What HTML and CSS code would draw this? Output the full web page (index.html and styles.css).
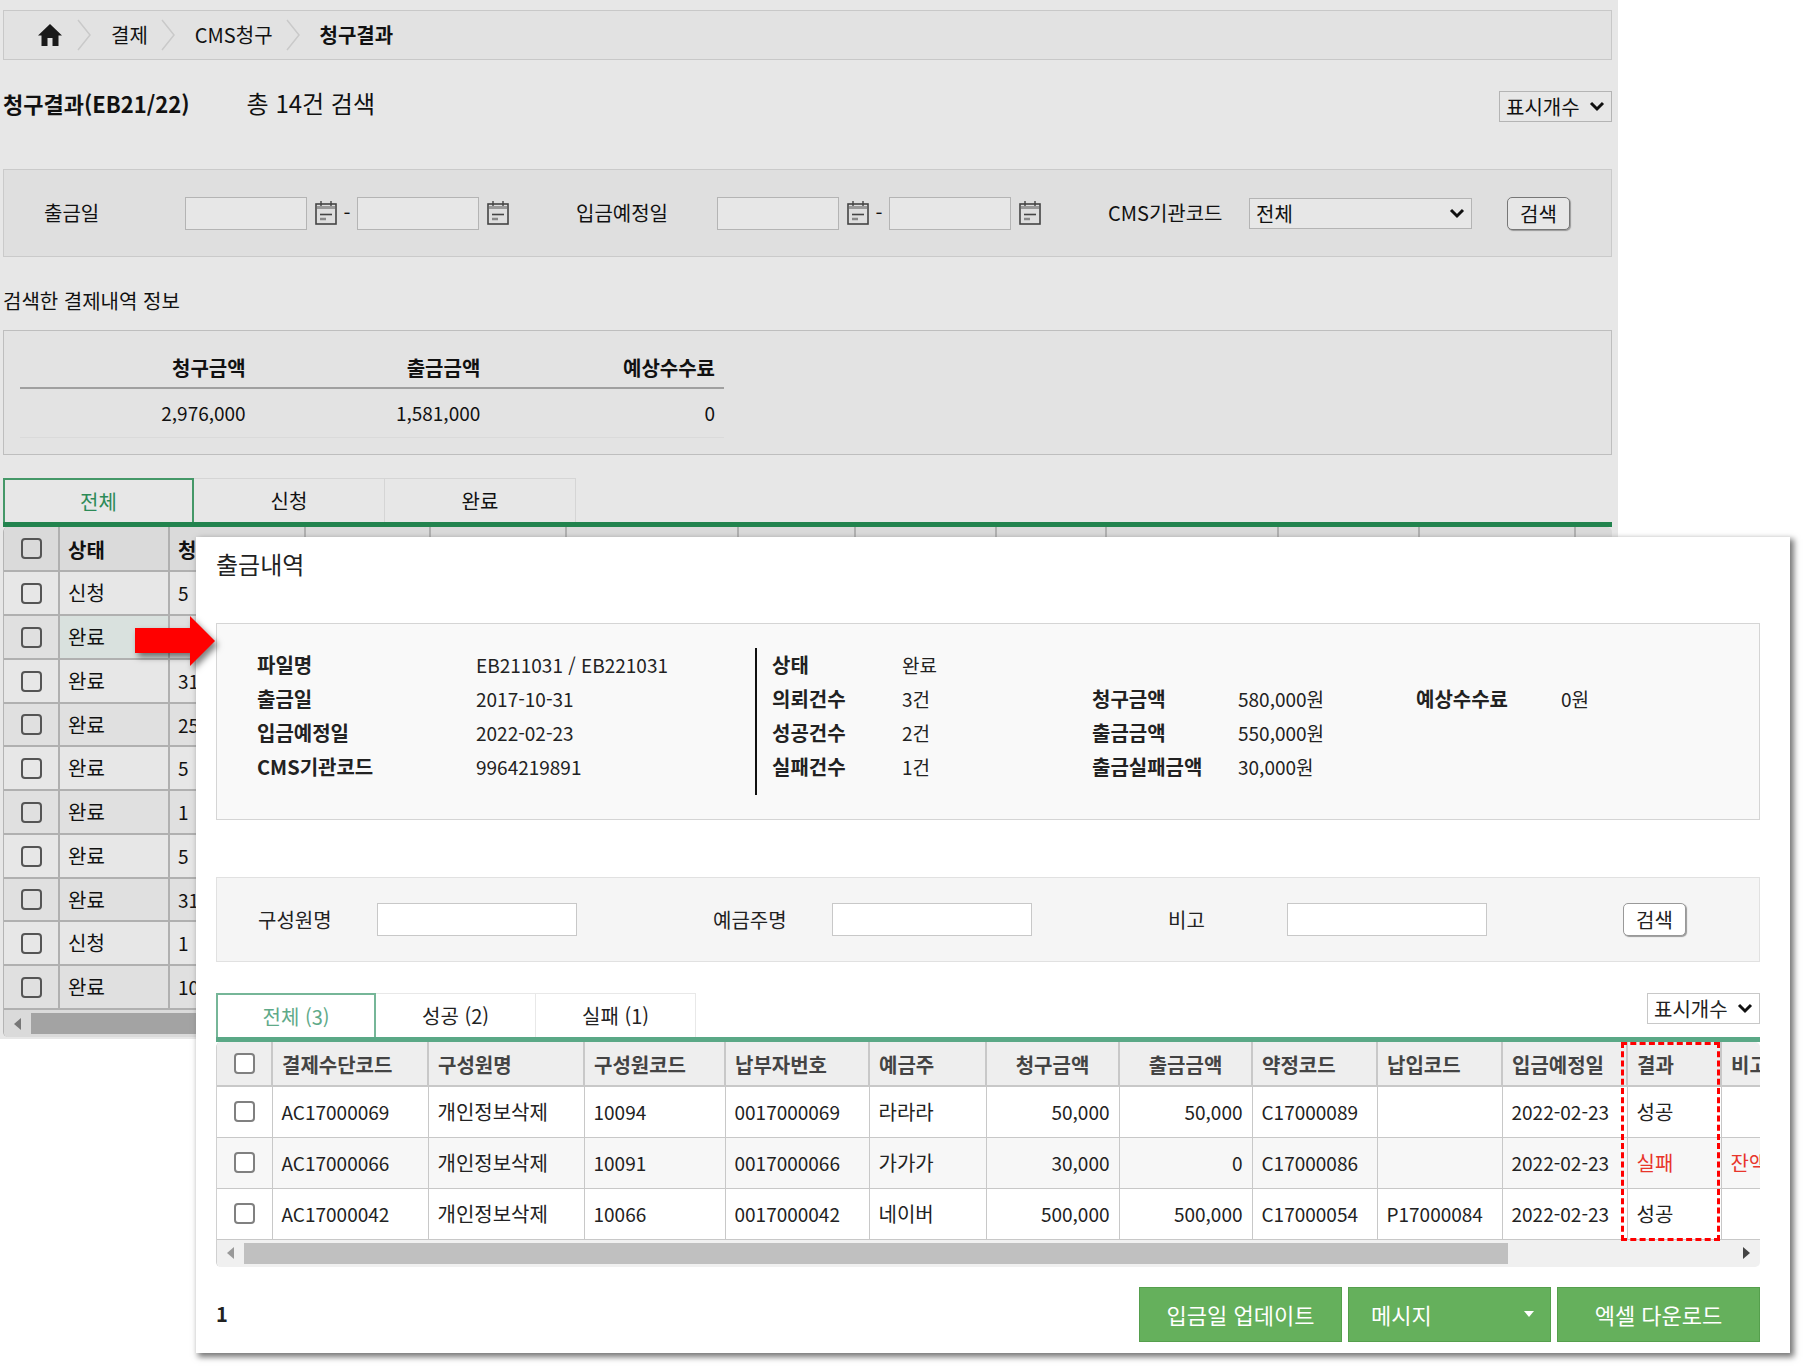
FILE: index.html
```html
<!DOCTYPE html>
<html lang="ko">
<head>
    <meta charset="UTF-8">
    <meta name="viewport" content="width=device-width, initial-scale=1.0">
    <title>청구결과</title>
    <link rel="stylesheet" href="styles.css">
</head>
<body>
    <svg class="sprite" aria-hidden="true">
        <symbol id="icon-calendar" viewBox="0 0 22 24">
            <rect x="1" y="3" width="20" height="20" fill="none" stroke="#444" stroke-width="1.6"/>
            <rect x="2" y="5" width="18" height="3" fill="#999"/>
            <path d="M6 0v5M16 0v5" stroke="#444" stroke-width="1.4"/>
            <path d="M5 13.500h12" stroke="#444" stroke-width="1.600"/>
            <path d="M5 18h6" stroke="#888" stroke-width="2.500"/>
        </symbol>
        <symbol id="icon-next" viewBox="0 0 14 32">
            <path d="M1 1l12 15L1 31" fill="none" stroke="#c9c9c9" stroke-width="1.500"/>
        </symbol>
    </svg>

    <main class="page">
        <nav class="breadcrumb">
            <a href="#" class="home" aria-label="홈">
                <svg width="24" height="22" viewBox="0 0 24 22"><path d="M12 0l12 11.500h-3.500V22h-6v-8h-5v8h-6V11.500H0z" fill="#1a1a1a"/></svg>
            </a>
            <svg class="next"><use href="#icon-next"/></svg>
            <a href="#">결제</a>
            <svg class="next"><use href="#icon-next"/></svg>
            <a href="#">CMS청구</a>
            <svg class="next"><use href="#icon-next"/></svg>
            <strong>청구결과</strong>
        </nav>

        <div class="title-row">
            <h1>청구결과(EB21/22)</h1>
            <span class="count">총 14건 검색</span>
            <select class="page-size" aria-label="표시개수"><option>표시개수</option></select>
        </div>

        <form class="search">
            <div class="field">
                <label for="outFrom">출금일</label>
                <input type="text" id="outFrom" class="date">
                <svg class="cal"><use href="#icon-calendar"/></svg>
                <span class="dash">-</span>
                <input type="text" class="date" aria-label="출금일 종료">
                <svg class="cal"><use href="#icon-calendar"/></svg>
            </div>
            <div class="field">
                <label for="inFrom">입금예정일</label>
                <input type="text" id="inFrom" class="date">
                <svg class="cal"><use href="#icon-calendar"/></svg>
                <span class="dash">-</span>
                <input type="text" class="date" aria-label="입금예정일 종료">
                <svg class="cal"><use href="#icon-calendar"/></svg>
            </div>
            <div class="field">
                <label for="cmsCode">CMS기관코드</label>
                <select id="cmsCode" class="code"><option>전체</option></select>
            </div>
            <button type="button" class="btn-search">검색</button>
        </form>

        <h2>검색한 결제내역 정보</h2>
        <div class="summary">
            <table>
                <thead><tr><th>청구금액</th><th>출금금액</th><th>예상수수료</th></tr></thead>
                <tbody><tr><td>2,976,000</td><td>1,581,000</td><td>0</td></tr></tbody>
            </table>
        </div>

        <div class="tabs">
            <button type="button" class="tab active">전체</button>
            <button type="button" class="tab">신청</button>
            <button type="button" class="tab">완료</button>
        </div>
        <div class="grid">
            <table>
                <colgroup>
                    <col class="c-check"><col class="c-110"><col class="c-136"><col class="c-125"><col class="c-136"><col class="c-172"><col class="c-117"><col class="c-141"><col class="c-110"><col class="c-172"><col class="c-141"><col class="c-156"><col>
                </colgroup>
                <thead>
                    <tr><th><input type="checkbox" aria-label="전체 선택"></th><th>상태</th><th>청</th><th></th><th></th><th></th><th></th><th></th><th></th><th></th><th></th><th></th><th></th></tr>
                </thead>
                <tbody>
                    <tr><td><input type="checkbox" aria-label="선택"></td><td>신청</td><td class="num">5</td><td></td><td></td><td></td><td></td><td></td><td></td><td></td><td></td><td></td><td></td></tr>
                    <tr><td><input type="checkbox" aria-label="선택"></td><td class="picked">완료</td><td></td><td></td><td></td><td></td><td></td><td></td><td></td><td></td><td></td><td></td><td></td></tr>
                    <tr><td><input type="checkbox" aria-label="선택"></td><td>완료</td><td class="num">31</td><td></td><td></td><td></td><td></td><td></td><td></td><td></td><td></td><td></td><td></td></tr>
                    <tr><td><input type="checkbox" aria-label="선택"></td><td>완료</td><td class="num">25</td><td></td><td></td><td></td><td></td><td></td><td></td><td></td><td></td><td></td><td></td></tr>
                    <tr><td><input type="checkbox" aria-label="선택"></td><td>완료</td><td class="num">5</td><td></td><td></td><td></td><td></td><td></td><td></td><td></td><td></td><td></td><td></td></tr>
                    <tr><td><input type="checkbox" aria-label="선택"></td><td>완료</td><td class="num">1</td><td></td><td></td><td></td><td></td><td></td><td></td><td></td><td></td><td></td><td></td></tr>
                    <tr><td><input type="checkbox" aria-label="선택"></td><td>완료</td><td class="num">5</td><td></td><td></td><td></td><td></td><td></td><td></td><td></td><td></td><td></td><td></td></tr>
                    <tr><td><input type="checkbox" aria-label="선택"></td><td>완료</td><td class="num">31</td><td></td><td></td><td></td><td></td><td></td><td></td><td></td><td></td><td></td><td></td></tr>
                    <tr><td><input type="checkbox" aria-label="선택"></td><td>신청</td><td class="num">1</td><td></td><td></td><td></td><td></td><td></td><td></td><td></td><td></td><td></td><td></td></tr>
                    <tr><td><input type="checkbox" aria-label="선택"></td><td>완료</td><td class="num">10</td><td></td><td></td><td></td><td></td><td></td><td></td><td></td><td></td><td></td><td></td></tr>
                </tbody>
            </table>
            <div class="scrollbar"><span class="arrow-left"></span><span class="thumb"></span><span class="arrow-right"></span></div>
        </div>
    </main>

    <section class="popup">
        <h2>출금내역</h2>

        <div class="info">
            <dl class="info-file">
                <dt>파일명</dt><dd>EB211031 / EB221031</dd>
                <dt>출금일</dt><dd>2017-10-31</dd>
                <dt>입금예정일</dt><dd>2022-02-23</dd>
                <dt>CMS기관코드</dt><dd>9964219891</dd>
            </dl>
            <dl class="info-status">
                <dt>상태</dt><dd>완료</dd>
                <dt>의뢰건수</dt><dd>3건</dd>
                <dt>성공건수</dt><dd>2건</dd>
                <dt>실패건수</dt><dd>1건</dd>
            </dl>
            <dl class="info-amount">
                <dt>청구금액</dt><dd>580,000원</dd>
                <dt>출금금액</dt><dd>550,000원</dd>
                <dt>출금실패금액</dt><dd>30,000원</dd>
            </dl>
            <dl class="info-fee">
                <dt>예상수수료</dt><dd>0원</dd>
            </dl>
        </div>

        <form class="search">
            <div class="field">
                <label for="member">구성원명</label>
                <input type="text" id="member">
            </div>
            <div class="field">
                <label for="holder">예금주명</label>
                <input type="text" id="holder">
            </div>
            <div class="field">
                <label for="note">비고</label>
                <input type="text" id="note">
            </div>
            <button type="button" class="btn-search">검색</button>
        </form>

        <div class="tabs">
            <button type="button" class="tab active">전체 (3)</button>
            <button type="button" class="tab">성공 (2)</button>
            <button type="button" class="tab">실패 (1)</button>
            <select class="page-size" aria-label="표시개수"><option>표시개수</option></select>
        </div>
        <div class="grid">
            <table>
                <colgroup>
                    <col class="c-check"><col class="c-156"><col class="c-156"><col class="c-141"><col class="c-144"><col class="c-117"><col class="c-133"><col class="c-133"><col class="c-125"><col class="c-125"><col class="c-125"><col class="c-94"><col class="c-156">
                </colgroup>
                <thead>
                    <tr><th><input type="checkbox" aria-label="전체 선택"></th><th>결제수단코드</th><th>구성원명</th><th>구성원코드</th><th>납부자번호</th><th>예금주</th><th class="center">청구금액</th><th class="center">출금금액</th><th>약정코드</th><th>납입코드</th><th>입금예정일</th><th>결과</th><th>비고</th></tr>
                </thead>
                <tbody>
                    <tr><td><input type="checkbox" aria-label="선택"></td><td class="num">AC17000069</td><td>개인정보삭제</td><td class="num">10094</td><td class="num">0017000069</td><td>라라라</td><td class="num right">50,000</td><td class="num right">50,000</td><td class="num">C17000089</td><td></td><td class="num">2022-02-23</td><td>성공</td><td></td></tr>
                    <tr><td><input type="checkbox" aria-label="선택"></td><td class="num">AC17000066</td><td>개인정보삭제</td><td class="num">10091</td><td class="num">0017000066</td><td>가가가</td><td class="num right">30,000</td><td class="num right">0</td><td class="num">C17000086</td><td></td><td class="num">2022-02-23</td><td class="fail">실패</td><td class="fail">잔액</td></tr>
                    <tr><td><input type="checkbox" aria-label="선택"></td><td class="num">AC17000042</td><td>개인정보삭제</td><td class="num">10066</td><td class="num">0017000042</td><td>네이버</td><td class="num right">500,000</td><td class="num right">500,000</td><td class="num">C17000054</td><td class="num">P17000084</td><td class="num">2022-02-23</td><td>성공</td><td></td></tr>
                </tbody>
            </table>
            <div class="scrollbar"><span class="arrow-left"></span><span class="thumb"></span><span class="arrow-right"></span></div>
            <div class="result-mark"></div>
        </div>

        <div class="popup-footer">
            <strong>1</strong>
            <div class="actions">
                <button type="button">입금일 업데이트</button>
                <button type="button" class="dropdown">메시지<span class="caret"></span></button>
                <button type="button">엑셀 다운로드</button>
            </div>
        </div>
    </section>

    <!-- arrow from the clicked row to the popup -->
    <svg class="pointer" width="80" height="50" viewBox="0 0 80 50"><path d="M0 12h55V0l25 25-25 25V37H0z" fill="#f00"/></svg>
</body>
</html>
```

FILE: styles.css
```css
* {
    box-sizing: border-box;
}

body {
    margin: 0;
    position: relative;
    min-height: 100vh;
    background: #fff;
    color: #111;
    font-family: "Noto Sans CJK KR", sans-serif;
    font-size: 20px;
    line-height: 28px;
}

a {
    color: inherit;
    text-decoration: none;
}

h1, h2, dl, dd, dt {
    margin: 0;
}

input, select, button {
    font-family: inherit;
    font-size: 20px;
    color: inherit;
}

table {
    border-collapse: collapse;
    table-layout: fixed;
}

.sprite {
    display: none;
}

.page {
    margin-right: 185px;
    padding: 10px 6px 2px 3px;
    background: #e7e7e7;
}

/* breadcrumb */
.breadcrumb {
    display: flex;
    align-items: center;
    height: 50px;
    padding-left: 34px;
    background: #e2e2e2;
    border: 1px solid #c8c8c8;
}

.home {
    display: flex;
}

.next {
    width: 14px;
    height: 32px;
    margin: 0 20px 0 13px;
}

.home + .next {
    margin-left: 15px;
}

/* title */
.title-row {
    display: flex;
    align-items: flex-start;
    margin-top: 31px;
    line-height: 24px;
}

h1 {
    font-size: 22px;
}

.count {
    margin-left: 57px;
    font-size: 24px;
}

.page-size {
    width: 113px;
    height: 31px;
    margin-left: auto;
}

select {
    appearance: none;
    padding: 0 6px;
    background: url("data:image/svg+xml,%3Csvg xmlns='http://www.w3.org/2000/svg' width='16' height='11'%3E%3Cpath d='M2 2l6 6 6-6' fill='none' stroke='%23111' stroke-width='3'/%3E%3C/svg%3E") no-repeat right 6px center;
    border: 1px solid #b4b4b4;
    border-radius: 0;
}

/* search forms */
.search {
    display: flex;
    align-items: center;
    gap: 67px;
    height: 88px;
    margin-top: 47px;
    padding-left: 40px;
    background: #dfdfdf;
    border: 1px solid #cacaca;
}

.field {
    display: flex;
    align-items: center;
}

.field label {
    width: 141px;
}

.field input {
    height: 33px;
    background: #e7e7e7;
    border: 1px solid #b4b4b4;
}

.date {
    width: 122px;
}

.cal {
    width: 22px;
    height: 24px;
    margin-left: 8px;
}

.dash {
    width: 20px;
    text-align: center;
}

.code {
    width: 223px;
    height: 31px;
}

.search .code {
    background-color: #e7e7e7;
}

.btn-search {
    width: 63px;
    height: 33px;
    margin-left: -32px;
    padding: 0;
    background: #e7e7e7;
    border: 1px solid #777;
    border-radius: 5px;
    box-shadow: 1px 1px 1px #999;
}

/* summary */
.page h2 {
    margin-top: 30px;
    font-size: 20px;
    font-weight: normal;
}

.summary {
    height: 125px;
    margin-top: 15px;
    padding: 18px 16px;
    background: #e3e3e3;
    border: 1px solid #bebebe;
}

.summary table {
    width: 704px;
}

.summary th, .summary td {
    height: 39px;
    padding: 0 9px;
    text-align: right;
}

.summary th {
    border-bottom: 2px solid #a0a0a0;
}

.summary td {
    height: 49px;
    font-size: 19px;
    border-bottom: 1px solid #dadada;
}

/* tabs */
.tabs {
    display: flex;
    margin-top: 23px;
    border-bottom: 5px solid #22834e;
}

.tab {
    width: 191px;
    height: 44px;
    padding: 0;
    background: transparent;
    border: 1px solid #d5d5d5;
    border-bottom: 0;
    border-left: 0;
}

.tab.active {
    color: #2c8a57;
    border: 2px solid #459868;
    border-bottom: 0;
}

/* data tables */
.grid {
    position: relative;
    overflow: hidden;
    border-left: 1px solid #b4b4b4;
    border-radius: 5px;
}

.grid table {
    width: 100%;
}

.grid th, .grid td {
    height: 44px;
    padding: 0 8px;
    overflow: hidden;
    text-align: left;
    white-space: nowrap;
    border-right: 2px solid #b0b0b0;
    border-bottom: 2px solid #b0b0b0;
}

.grid th:last-child, .grid td:last-child {
    border-right: 0;
}

.grid th {
    padding-top: 2px;
    background: #dadada;
}

.page .grid tr:nth-child(4n) td {
    height: 43px;
}

.grid tr:nth-child(even) td {
    background: #e0e0e0;
}

.grid td.picked.picked {
    background: #d9e1de;
}

.grid th:first-child, .grid td:first-child {
    padding: 0;
    text-align: center;
}

.grid .num {
    font-size: 19px;
}

.grid .center {
    text-align: center;
}

.grid .right {
    text-align: right;
}

.grid .fail {
    color: #e8352b;
}

.c-check { width: 55px; }
.c-94 { width: 94px; }
.c-110 { width: 110px; }
.c-117 { width: 117px; }
.c-125 { width: 125px; }
.c-133 { width: 133px; }
.c-136 { width: 136px; }
.c-141 { width: 141px; }
.c-144 { width: 144px; }
.c-156 { width: 156px; }
.c-172 { width: 172px; }

input[type="checkbox"] {
    appearance: none;
    display: block;
    width: 21px;
    height: 21px;
    margin: 0 auto;
    border: 2px solid #555;
    border-radius: 4px;
}

.scrollbar {
    display: flex;
    align-items: center;
    height: 27px;
    padding: 0 10px;
    background: #dadada;
}

.arrow-left, .arrow-right {
    border: 6px solid transparent;
}

.arrow-left {
    border-left: 0;
    border-right: 7px solid #777;
}

.arrow-right {
    margin-left: auto;
    border-right: 0;
    border-left: 7px solid #444;
}

.thumb {
    width: 83%;
    height: 21px;
    margin-left: 10px;
    background: #a3a3a3;
}

/* popup */
.popup {
    position: absolute;
    top: 537px;
    left: 196px;
    right: 13px;
    padding: 13px 30px 11px 20px;
    background: #fff;
    color: #222;
    box-shadow: 3px 3px 6px 1px #777;
}

.popup h2 {
    font-size: 24px;
    font-weight: normal;
}

.info {
    display: flex;
    height: 197px;
    margin-top: 45px;
    padding: 24px 0 0 40px;
    background: #f9f9f9;
    border: 1px solid #d5d5d5;
}

.info dl {
    display: grid;
    align-content: start;
    height: 147px;
    line-height: 34px;
}

.info dt {
    font-weight: bold;
}

.info dd {
    font-size: 19px;
}

.info .info-file {
    grid-template-columns: 219px 279px;
    border-right: 2px solid #111;
}

.info .info-status {
    grid-template-columns: 130px 190px;
    padding-left: 15px;
}

.info .info-amount {
    grid-template-columns: 146px 178px;
    padding-top: 34px;
}

.info .info-fee {
    grid-template-columns: 145px auto;
    padding-top: 34px;
}

.popup .search {
    gap: 136px;
    height: 85px;
    margin-top: 57px;
    padding-left: 41px;
    background: #f5f5f5;
    border-color: #e1e1e1;
}

.popup .search label {
    width: 119px;
}

.popup .search input {
    width: 200px;
    background: #fff;
    border-color: #c8c8c8;
}

.popup .btn-search {
    margin-left: 0;
    background: #fff;
    border-color: #999;
}

.popup .tabs {
    margin-top: 31px;
    border-color: #5aa886;
}

.popup .tab {
    width: 160px;
    border-color: #e8e8e8;
}

.popup .tab.active {
    color: #5faa89;
    border-color: #76b698;
}

.popup select {
    border-color: #c8c8c8;
}

.popup .grid {
    border-color: #d0d0d0;
}

.popup .grid table {
    width: 1660px;
}

.popup .grid th, .popup .grid td {
    padding-left: 9px;
    padding-right: 9px;
    border-color: #c8c8c8;
}

.popup .grid th {
    background: #eee;
    color: #444;
}

.popup .grid td {
    height: 51px;
    border-width: 1px;
}

.popup .grid tr:nth-child(even) td {
    background: #f7f7f7;
}

.popup .grid th:first-child, .popup .grid td:first-child {
    padding: 0;
}

.popup input[type="checkbox"] {
    background: #fff;
    border-color: #808080;
}

.popup .scrollbar {
    background: #f0f0f0;
}

.popup .thumb {
    background: #c0c0c0;
}

.popup .arrow-left {
    border-right-color: #999;
}

/* marks the result column */
.result-mark {
    position: absolute;
    top: 0;
    left: 1404px;
    width: 99px;
    height: 199px;
    border: 3px dashed #f00;
}

.popup-footer {
    display: flex;
    align-items: center;
    justify-content: space-between;
    margin-top: 20px;
}

.actions {
    display: flex;
    gap: 6px;
}

.actions button {
    width: 203px;
    height: 55px;
    padding: 0 22px;
    background: #65b05c;
    border: 1px solid #559f4d;
    color: #fff;
    font-size: 22px;
}

.actions .dropdown {
    display: flex;
    align-items: center;
    justify-content: space-between;
    padding-right: 16px;
}

.caret {
    border: 5px solid transparent;
    border-top: 6px solid #fff;
    border-bottom: 0;
}

.pointer {
    position: absolute;
    top: 616px;
    left: 135px;
    overflow: visible;
    filter: drop-shadow(3px 4px 3px rgba(0, 0, 0, 0.5));
}
```
